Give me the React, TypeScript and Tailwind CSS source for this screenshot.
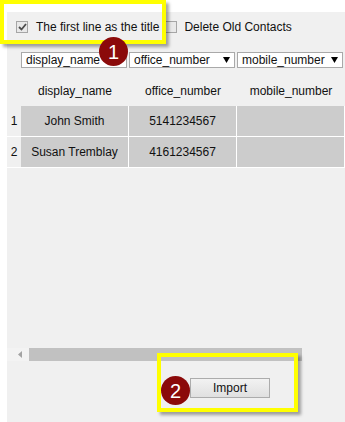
import React from 'react';

const columns = ['display_name', 'office_number', 'mobile_number'];

const rows = [
  ['John Smith', '5141234567', ''],
  ['Susan Tremblay', '4161234567', ''],
];

const CheckBox: React.FC<{ checked?: boolean }> = ({ checked }) => (
  <span className="flex h-[12px] w-[12px] items-center justify-center border border-[#a6a6a6] bg-[#e9e9e9]">
    {checked && (
      <svg width="9" height="8" viewBox="0 0 9 8">
        <path d="M1 4 L3.5 6.5 L8 1" fill="none" stroke="#4d4d4d" strokeWidth="1.8" />
      </svg>
    )}
  </span>
);

const FakeSelect: React.FC<{ label: string }> = ({ label }) => (
  <div className="flex h-[16px] w-[106px] items-center justify-between border border-[#a9a9a9] bg-white pl-[4px] pr-[4px]">
    <span className="leading-none">{label}</span>
    <svg width="7" height="6" viewBox="0 0 7 6">
      <path d="M0 0 H7 L3.5 6 Z" fill="#000" />
    </svg>
  </div>
);

const Badge: React.FC<{ n: number; className: string }> = ({ n, className }) => (
  <div
    className={`absolute flex h-[29px] w-[29px] items-center justify-center rounded-full bg-[#8b0a0a] text-[20px] leading-none text-white ${className}`}
  >
    {n}
  </div>
);

export default function App() {
  return (
    <div
      className="relative h-[422px] w-[345px] overflow-hidden bg-white text-[12px] text-[#111]"
      style={{ fontFamily: '"Liberation Sans", Arial, sans-serif' }}
    >
      <div className="ml-[7px] mt-[12px] flex h-[410px] flex-col bg-[#f0f0f0]">
        {/* options */}
        <div className="flex h-[29px] items-center pl-[9px]">
          <CheckBox checked />
          <span className="ml-[8px]">The first line as the title</span>
          <span className="ml-[6px]">
            <CheckBox />
          </span>
          <span className="ml-[7px]">Delete Old Contacts</span>
        </div>

        {/* field mapping */}
        <div className="mt-[11px] flex gap-[2px] pl-[14px]">
          {columns.map((c) => (
            <FakeSelect key={c} label={c} />
          ))}
        </div>

        {/* preview table */}
        <div className="mt-[8px] flex flex-col">
          <div className="flex h-[30px] items-center pl-[14px]">
            {columns.map((c) => (
              <div key={c} className="w-[108px] text-center">
                {c}
              </div>
            ))}
          </div>
          {rows.map((r, i) => (
            <div key={i} className="flex h-[31px] border-b border-white">
              <div className="flex w-[14px] items-center justify-center">{i + 1}</div>
              {r.map((v, j) => (
                <div
                  key={j}
                  className="flex w-[108px] items-center justify-center border-r border-white bg-[#cccccc]"
                >
                  {v}
                </div>
              ))}
            </div>
          ))}
        </div>

        {/* horizontal scrollbar */}
        <div className="mt-auto flex h-[13px] items-center">
          <div className="flex h-[13px] w-[22px] items-center justify-center bg-[#f3f3f3] pl-[4px]">
            <svg width="4" height="7" viewBox="0 0 4 7">
              <path d="M4 0 V7 L0 3.5 Z" fill="#a3a3a3" />
            </svg>
          </div>
          <div className="h-[13px] w-[273px] bg-[#c1c1c1]" />
        </div>

        {/* import */}
        <div className="mb-[24px] mt-[17px] flex pl-[183px]">
          <button className="h-[20px] w-[80px] border border-[#acacac] bg-gradient-to-b from-[#f2f2f2] to-[#e0e0e0] text-[12px] text-[#111]">
            Import
          </button>
        </div>
      </div>

      {/* annotations */}
      <div className="absolute left-0 top-0 h-[44px] w-[166px] border-[4px] border-[#ffff00] shadow-[3px_3px_3px_rgba(0,0,0,0.35)]" />
      <div className="absolute left-[157px] top-[353px] h-[59px] w-[141px] border-[4px] border-[#ffff00] shadow-[3px_3px_3px_rgba(0,0,0,0.35)]" />
      <Badge n={1} className="left-[99px] top-[37px]" />
      <Badge n={2} className="left-[161px] top-[376px]" />
    </div>
  );
}
